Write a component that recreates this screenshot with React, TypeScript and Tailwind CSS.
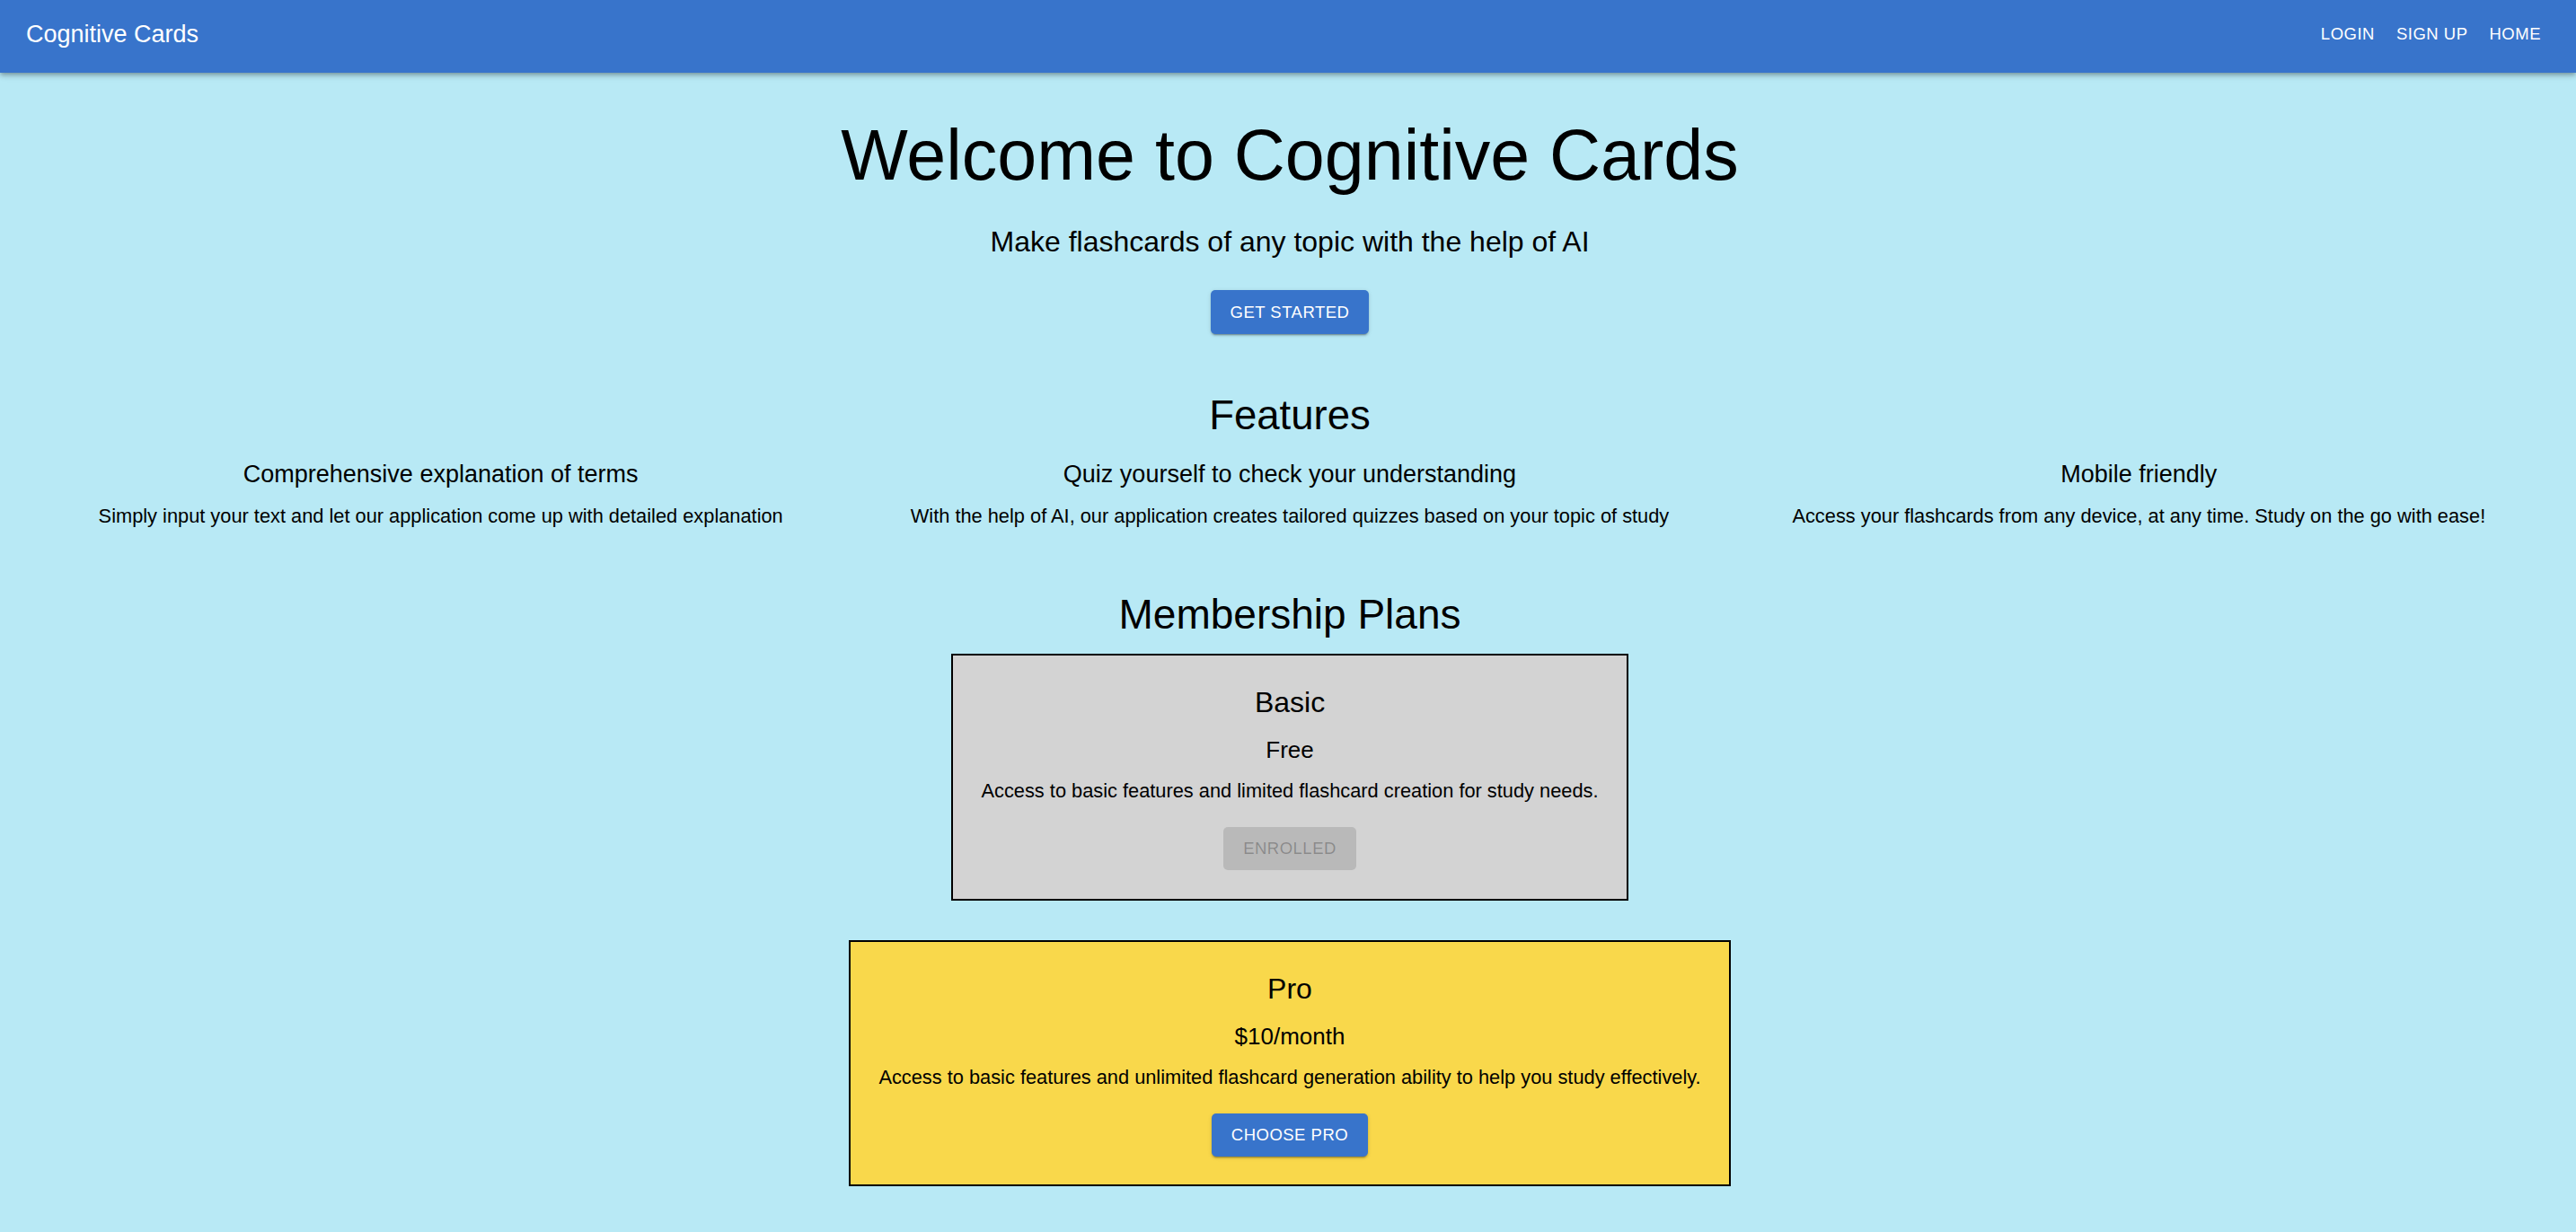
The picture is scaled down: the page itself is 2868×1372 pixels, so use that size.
export default function App() {
  const btnShadow =
    "shadow-[0_3px_1px_-2px_rgba(0,0,0,0.2),0_2px_2px_0_rgba(0,0,0,0.14),0_1px_5px_0_rgba(0,0,0,0.12)]";
  return (
    <div className="min-h-screen bg-[#b8e9f5] font-['Liberation_Sans',Arial,sans-serif] text-black">
      <header className="relative z-10 flex h-[81px] items-center justify-between bg-[#3874cb] pb-[6px] pl-[29px] pr-[27px] text-white shadow-[0_2px_4px_-1px_rgba(0,0,0,0.2),0_4px_5px_0_rgba(0,0,0,0.14),0_1px_10px_0_rgba(0,0,0,0.12)]">
        <div className="text-[27px] leading-[34px]">Cognitive Cards</div>
        <nav className="flex">
          {["LOGIN", "SIGN UP", "HOME"].map((l) => (
            <button
              key={l}
              className="px-[12px] text-[18.5px] leading-[30px] tracking-[0.5px] text-white"
            >
              {l}
            </button>
          ))}
        </nav>
      </header>

      <main className="flex flex-col items-center pl-[4px]">
        <h1 className="mt-[46px] text-[79px] font-light leading-[92px]">
          Welcome to Cognitive Cards
        </h1>
        <p className="mt-[30px] text-[32px] leading-[40px]">
          Make flashcards of any topic with the help of AI
        </p>
        <button
          className={`mt-[34px] flex h-[49px] items-center rounded-[5px] bg-[#3874cb] px-[22px] text-[18.5px] tracking-[0.5px] text-white ${btnShadow}`}
        >
          GET STARTED
        </button>

        <h2 className="mt-[63px] text-[45.5px] leading-[56px]">Features</h2>
        <div className="grid w-full grid-cols-3 px-[14px]">
          {[
            [
              "Comprehensive explanation of terms",
              "Simply input your text and let our application come up with detailed explanation",
            ],
            [
              "Quiz yourself to check your understanding",
              "With the help of AI, our application creates tailored quizzes based on your topic of study",
            ],
            [
              "Mobile friendly",
              "Access your flashcards from any device, at any time. Study on the go with ease!",
            ],
          ].map(([t, d]) => (
            <div key={t} className="flex flex-col items-center text-center">
              <h3 className="mt-[20px] text-[27px] leading-[34px]">{t}</h3>
              <p className="mt-[15px] text-[21.8px] leading-[30px]">{d}</p>
            </div>
          ))}
        </div>

        <h2 className="mt-[66px] text-[46px] leading-[56px]">Membership Plans</h2>

        <div className="mt-[16px] flex w-[754px] flex-col items-center border-2 border-black bg-[#d3d3d3] pb-[32px] pt-[32px] text-center">
          <h3 className="text-[32px] leading-[40px]">Basic</h3>
          <div className="mt-[16px] text-[26px] leading-[34px]">Free</div>
          <p className="mt-[14px] text-[21.8px] leading-[30px]">
            Access to basic features and limited flashcard creation for study needs.
          </p>
          <button
            disabled
            className="mt-[25px] flex h-[48px] items-center rounded-[5px] bg-black/12 px-[22px] text-[18.5px] tracking-[0.5px] text-black/26"
          >
            ENROLLED
          </button>
        </div>

        <div className="mb-[51px] mt-[44px] flex w-[982px] flex-col items-center border-2 border-black bg-[#f9d84b] pb-[31px] pt-[32px] text-center">
          <h3 className="text-[32px] leading-[40px]">Pro</h3>
          <div className="mt-[16px] text-[26px] leading-[34px]">$10/month</div>
          <p className="mt-[14px] text-[21.8px] leading-[30px]">
            Access to basic features and unlimited flashcard generation ability to help you study effectively.
          </p>
          <button
            className={`mt-[25px] flex h-[48px] items-center rounded-[5px] bg-[#3874cb] px-[22px] text-[18.5px] tracking-[0.5px] text-white ${btnShadow}`}
          >
            CHOOSE PRO
          </button>
        </div>
      </main>
    </div>
  );
}
